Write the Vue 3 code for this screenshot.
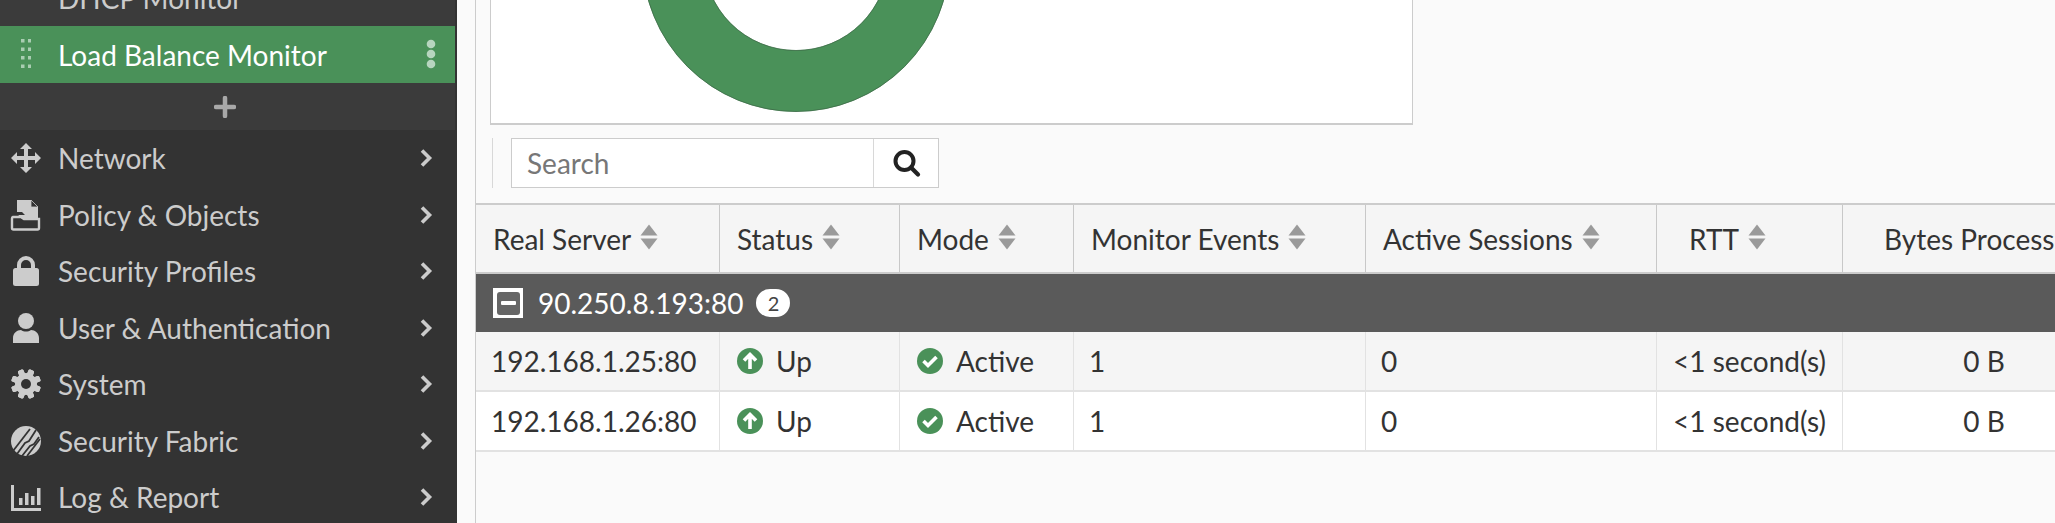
<script setup>
const navItems = [
  { label: 'Network', icon: 'move' },
  { label: 'Policy & Objects', icon: 'policy' },
  { label: 'Security Profiles', icon: 'lock' },
  { label: 'User & Authentication', icon: 'user' },
  { label: 'System', icon: 'gear' },
  { label: 'Security Fabric', icon: 'fabric' },
  { label: 'Log & Report', icon: 'log' },
]

const columns = [
  { label: 'Real Server', sort: true },
  { label: 'Status', sort: true },
  { label: 'Mode', sort: true },
  { label: 'Monitor Events', sort: true },
  { label: 'Active Sessions', sort: true },
  { label: 'RTT', sort: true, cls: 'h-rtt' },
  { label: 'Bytes Processed', sort: false, cls: 'h-bytes' },
]

const servers = ['192.168.1.25:80', '192.168.1.26:80']

const gearTeeth = [0, 45, 90, 135, 180, 225, 270, 315]
</script>

<template>
  <div class="page">
    <aside class="sidebar">
      <div class="submenu">
        <div class="sub-item">DHCP Monitor</div>
        <div class="sub-item active">
          <svg class="grip" width="10" height="30" viewBox="0 0 10 30">
            <g fill="#a9cdb2">
              <rect v-for="y in [0, 8.5, 17, 25.5]" :key="'l' + y" x="0" :y="y" width="3.5" height="3.5" />
              <rect v-for="y in [0, 8.5, 17, 25.5]" :key="'r' + y" x="7" :y="y" width="3.5" height="3.5" />
            </g>
          </svg>
          <span>Load Balance Monitor</span>
          <svg class="dots" width="10" height="30" viewBox="0 0 10 30">
            <circle cx="5" cy="5" r="4.3" fill="#b7d5bf" />
            <circle cx="5" cy="15" r="4.3" fill="#b7d5bf" />
            <circle cx="5" cy="25" r="4.3" fill="#b7d5bf" />
          </svg>
        </div>
        <div class="add-row">
          <svg width="22" height="22" viewBox="0 0 22 22">
            <path d="M11 2v18M2 11h18" stroke="#a8a8a8" stroke-width="4.5" stroke-linecap="round" />
          </svg>
        </div>
      </div>

      <nav class="nav">
        <div v-for="item in navItems" :key="item.label" class="nav-item">
          <span class="nav-icon">
            <svg width="32" height="32" viewBox="0 0 32 32" fill="#cccccc">
              <path
                v-if="item.icon === 'move'"
                d="M16 1l6 6h-4v7h7v-4l6 6-6 6v-4h-7v7h4l-6 6-6-6h4v-7H7v4l-6-6 6-6v4h7V7h-4z"
              />
              <template v-else-if="item.icon === 'policy'">
                <path d="M7 1h14v7h7v8H15l-3-3H7z" />
                <path d="M21 1l7 7h-7z" fill="#333333" stroke="#cccccc" stroke-width="0.8" />
                <path d="M3 18h8l3 2h15v9a1.5 1.5 0 0 1-1.5 1.5h-24A1.5 1.5 0 0 1 2 29V19.500A1.500 1.500 0 0 1 3 18z" fill="none" stroke="#cccccc" stroke-width="2.400" />
                <path d="M9 16h19v5H14l-3-2H7z" />
              </template>
              <template v-else-if="item.icon === 'lock'">
                <path d="M9 14v-4a7 7 0 0 1 14 0v4" fill="none" stroke="#cccccc" stroke-width="4" />
                <rect x="3" y="13" width="26" height="18" rx="2.500" />
              </template>
              <template v-else-if="item.icon === 'user'">
                <circle cx="16" cy="9" r="8" />
                <path d="M3 31v-5c0-5 4-8 8-8 3 2 7 2 10 0 4 0 8 3 8 8v5z" />
              </template>
              <template v-else-if="item.icon === 'gear'">
                <rect v-for="a in gearTeeth" :key="a" x="13" y="1" width="6" height="30" rx="1.500" :transform="`rotate(${a + 22.5} 16 16)`" />
                <circle cx="16" cy="16" r="11" />
                <circle cx="16" cy="16" r="5" fill="#333333" />
              </template>
              <template v-else-if="item.icon === 'fabric'">
                <circle cx="16" cy="16" r="15" />
                <g fill="none" stroke="#333333" stroke-width="1.800">
                  <path d="M3 26L20 4" />
                  <path d="M7 29l8-11 4-2 7-11" />
                  <path d="M12 31l8-10 4-2 5-7" />
                  <path d="M17 31l13-17" />
                </g>
              </template>
              <template v-else>
                <path d="M1 4h3v23h27v3H1z" />
                <rect x="9" y="17" width="3.500" height="7" />
                <rect x="15" y="12" width="3.500" height="12" />
                <rect x="21" y="15" width="3.500" height="9" />
                <rect x="27" y="7" width="3.500" height="17" />
              </template>
            </svg>
          </span>
          <span class="nav-label">{{ item.label }}</span>
          <svg class="chevron" width="14" height="20" viewBox="0 0 14 20">
            <path d="M3 2.500L10.500 10 3 17.500" fill="none" stroke="#cccccc" stroke-width="3.600" />
          </svg>
        </div>
      </nav>
    </aside>

    <main class="main">
      <div class="chart-box">
        <svg class="ring" width="310" height="123" viewBox="0 0 310 123">
          <circle cx="155" cy="-42" r="123" fill="none" stroke="#4a9159" stroke-width="61.500" />
          <circle cx="155" cy="-42" r="153.500" fill="none" stroke="#3d6b48" stroke-width="0.800" />
          <circle cx="155" cy="-42" r="92.500" fill="none" stroke="#3d6b48" stroke-width="0.800" />
        </svg>
      </div>

      <div class="toolbar">
        <div class="search">
          <input class="search-input" type="text" placeholder="Search" />
          <button class="search-btn" type="button">
            <svg width="30" height="30" viewBox="0 0 30 30">
              <circle cx="13.500" cy="13" r="9" fill="none" stroke="#222222" stroke-width="4" />
              <path d="M20 19.500l7 7" stroke="#222222" stroke-width="4.200" stroke-linecap="round" />
            </svg>
          </button>
        </div>
      </div>

      <div class="table">
        <div class="row head">
          <div v-for="col in columns" :key="col.label" class="cell" :class="col.cls">
            <span>{{ col.label }}</span>
            <svg v-if="col.sort" class="sort" width="18" height="26" viewBox="0 0 18 26">
              <path d="M9 .5L17.500 11.500H.5z" fill="#9a9a9a" />
              <path d="M9 25.500L17.500 14.500H.5z" fill="#9a9a9a" />
            </svg>
          </div>
        </div>

        <div class="group">
          <span class="toggle">
            <span class="toggle-inner"><i></i></span>
          </span>
          <span>90.250.8.193:80</span>
          <span class="badge">2</span>
        </div>

        <div v-for="server in servers" :key="server" class="row body">
          <div class="cell">{{ server }}</div>
          <div class="cell status">
            <svg width="26" height="26" viewBox="0 0 26 26">
              <circle cx="13" cy="13" r="13" fill="#4a9159" />
              <path d="M13 21V7M7 12.500L13 6.500l6 6" fill="none" stroke="#ffffff" stroke-width="3.600" />
            </svg>
            <span>Up</span>
          </div>
          <div class="cell status">
            <svg width="26" height="26" viewBox="0 0 26 26">
              <circle cx="13" cy="13" r="13" fill="#4a9159" />
              <path d="M6.500 13l4.500 4.500 8.500-8.500" fill="none" stroke="#ffffff" stroke-width="3.600" />
            </svg>
            <span>Active</span>
          </div>
          <div class="cell">1</div>
          <div class="cell">0</div>
          <div class="cell center">&lt;1 second(s)</div>
          <div class="cell center">0 B</div>
        </div>
      </div>
    </main>
  </div>
</template>

<style>
html,
body {
  margin: 0;
  overflow: hidden;
}
</style>

<style scoped>
.page {
  display: flex;
  width: 2055px;
  height: 523px;
  overflow: hidden;
  background: #fafafa;
  font-family: Lato, "Open Sans", sans-serif;
  font-size: 28px;
  color: #333333;
}

.sidebar {
  flex: 0 0 457px;
  height: 523px;
  overflow: hidden;
  background: #333333;
  color: #cccccc;
}

.submenu {
  width: 455px;
  margin-top: -31px;
  background: #3b3b3b;
}

.sub-item {
  display: flex;
  align-items: center;
  height: 57px;
  padding-left: 58px;
  position: relative;
}

.sub-item.active {
  background: #4a9159;
  color: #ffffff;
}

.grip {
  position: absolute;
  left: 21px;
  top: 13px;
}

.dots {
  position: absolute;
  left: 426px;
  top: 13px;
}

.add-row {
  display: flex;
  align-items: center;
  justify-content: center;
  height: 47px;
  padding-right: 5px;
}

.nav-item {
  display: flex;
  align-items: center;
  height: 56.500px;
}

.nav-icon {
  display: flex;
  justify-content: center;
  width: 52px;
  margin-right: 6px;
}

.nav-label {
  flex: 1;
}

.chevron {
  margin-right: 24px;
}

.main {
  flex: 0 0 auto;
  width: 1580px;
  height: 523px;
  margin-left: 18px;
  border-left: 1px solid #cccccc;
  overflow: hidden;
}

.chart-box {
  width: 921px;
  height: 123px;
  margin-left: 14px;
  padding-left: 146px;
  box-sizing: border-box;
  background: #ffffff;
  border: 1px solid #cccccc;
  border-top: 0;
  border-bottom-width: 2px;
  box-sizing: content-box;
  padding-left: 0;
}

.ring {
  display: block;
  margin-left: 150px;
}

.toolbar {
  height: 50px;
  margin: 13px 0 15px 16px;
  padding-left: 18px;
  border-left: 1px solid #d8d8d8;
}

.search {
  display: flex;
  width: 428px;
  height: 50px;
  box-sizing: border-box;
  background: #ffffff;
  border: 1px solid #cccccc;
}

.search-input {
  flex: 1;
  min-width: 0;
  padding: 0 15px;
  border: 0;
  outline: 0;
  background: transparent;
  font: inherit;
  color: #333333;
}

.search-input::placeholder {
  color: #777777;
  opacity: 1;
}

.search-btn {
  display: flex;
  align-items: center;
  justify-content: center;
  width: 65px;
  padding: 0;
  background: #ffffff;
  border: 0;
  border-left: 1px solid #d8d8d8;
}

.table {
  width: 1650px;
  background: #ffffff;
}

.row {
  display: grid;
  grid-template-columns: 244px 180px 174px 292px 291px 186px 283px;
}

.cell {
  display: flex;
  align-items: center;
  box-sizing: border-box;
  padding-left: 15px;
  border-right: 1px solid #e2e2e2;
  border-bottom: 2px solid #e2e2e2;
  white-space: nowrap;
}

.head {
  height: 69px;
  background: #f5f5f5;
  border-top: 2px solid #cccccc;
  box-sizing: content-box;
  height: 67px;
}

.head .cell {
  padding-left: 17px;
  border-right-color: #c8c8c8;
  border-bottom: 0;
}

.head .h-rtt {
  padding-left: 32px;
}

.head .h-bytes {
  padding-left: 41px;
}

.sort {
  margin-left: 9px;
  margin-top: -4px;
}

.group {
  display: flex;
  align-items: center;
  height: 60px;
  box-sizing: border-box;
  padding-left: 17px;
  background: #5a5a5a;
  border-top: 2px solid #cccccc;
  color: #ffffff;
}

.toggle {
  display: flex;
  align-items: center;
  justify-content: center;
  width: 30px;
  height: 30px;
  margin-right: 15px;
  background: #ffffff;
}

.toggle-inner {
  display: flex;
  align-items: center;
  justify-content: center;
  width: 23px;
  height: 23px;
  border-radius: 3px;
  background: #666666;
}

.toggle-inner i {
  display: block;
  width: 15px;
  height: 4px;
  border-radius: 1px;
  background: #ffffff;
}

.badge {
  display: flex;
  align-items: center;
  justify-content: center;
  width: 34px;
  height: 28px;
  margin-left: 13px;
  border-radius: 14px;
  background: #ffffff;
  color: #444444;
  font-size: 20px;
}

.body {
  height: 60px;
}

.body:nth-child(3) .cell {
  background: #f5f5f5;
}

.status {
  gap: 13px;
  padding-left: 17px;
}

.center {
  justify-content: center;
  padding-left: 0;
}
</style>
